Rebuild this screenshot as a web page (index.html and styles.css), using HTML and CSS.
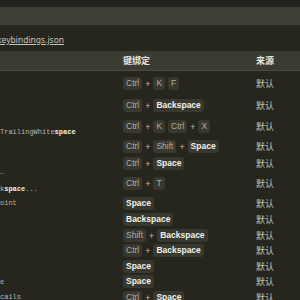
FILE: index.html
```html
<!DOCTYPE html>
<html lang="zh-CN">
<head>
    <meta charset="UTF-8">
    <title>键盘快捷方式</title>
    <link rel="stylesheet" href="styles.css">
</head>
<body>
    <div class="top-strip"></div>
    <div class="search-bar"></div>
    <div class="link-row"><a href="#">keybindings.json</a></div>

    <div class="table">
        <div class="head">
            <div></div>
            <div>键绑定</div>
            <div>来源</div>
        </div>

        <div class="row r1">
            <div class="cmd"></div>
            <div class="keys"><kbd>Ctrl</kbd><i>+</i><kbd>K</kbd><kbd>F</kbd></div>
            <div class="src">默认</div>
        </div>
        <div class="row r2">
            <div class="cmd"></div>
            <div class="keys"><kbd>Ctrl</kbd><i>+</i><kbd class="hit">Backspace</kbd></div>
            <div class="src">默认</div>
        </div>
        <div class="row r3">
            <div class="cmd low">TrailingWhite<b>space</b></div>
            <div class="keys"><kbd>Ctrl</kbd><i>+</i><kbd>K</kbd><kbd>Ctrl</kbd><i>+</i><kbd>X</kbd></div>
            <div class="src">默认</div>
        </div>
        <div class="row r4">
            <div class="cmd"></div>
            <div class="keys"><kbd>Ctrl</kbd><i>+</i><kbd>Shift</kbd><i>+</i><kbd class="hit">Space</kbd></div>
            <div class="src">默认</div>
        </div>
        <div class="row r5">
            <div class="cmd"></div>
            <div class="keys"><kbd>Ctrl</kbd><i>+</i><kbd class="hit">Space</kbd></div>
            <div class="src">默认</div>
        </div>
        <div class="row r6">
            <div class="cmd two"><span>—</span><span>k<b>space</b>...</span></div>
            <div class="keys"><kbd>Ctrl</kbd><i>+</i><kbd>T</kbd></div>
            <div class="src">默认</div>
        </div>
        <div class="row r7">
            <div class="cmd">oint</div>
            <div class="keys"><kbd class="hit">Space</kbd></div>
            <div class="src">默认</div>
        </div>
        <div class="row r8">
            <div class="cmd"></div>
            <div class="keys"><kbd class="hit">Backspace</kbd></div>
            <div class="src">默认</div>
        </div>
        <div class="row r9">
            <div class="cmd"></div>
            <div class="keys"><kbd>Shift</kbd><i>+</i><kbd class="hit">Backspace</kbd></div>
            <div class="src">默认</div>
        </div>
        <div class="row r10">
            <div class="cmd"></div>
            <div class="keys"><kbd>Ctrl</kbd><i>+</i><kbd class="hit">Backspace</kbd></div>
            <div class="src">默认</div>
        </div>
        <div class="row r11">
            <div class="cmd"></div>
            <div class="keys"><kbd class="hit">Space</kbd></div>
            <div class="src">默认</div>
        </div>
        <div class="row r12">
            <div class="cmd">e</div>
            <div class="keys"><kbd class="hit">Space</kbd></div>
            <div class="src">默认</div>
        </div>
        <div class="row r13">
            <div class="cmd">cails</div>
            <div class="keys"><kbd>Ctrl</kbd><i>+</i><kbd class="hit">Space</kbd></div>
            <div class="src">默认</div>
        </div>
    </div>
</body>
</html>
```

FILE: styles.css
```css
* {
    margin: 0;
    padding: 0;
    box-sizing: border-box;
}

body {
    width: 300px;
    height: 300px;
    overflow: hidden;
    background: #26261f;
    color: #c8c8c0;
    font-family: "Noto Sans", "Noto Sans CJK SC", sans-serif;
    font-size: 9px;
}

/* Top area */
.top-strip {
    height: 7px;
    background: #23231d;
}

.search-bar {
    height: 18px;
    background: #3e3f36;
}

.link-row {
    height: 26px;
    padding-top: 9px;
    line-height: 12px;
}

.link-row a {
    color: #c4c4bc;
    font-size: 8.5px;
    text-decoration: underline;
    text-underline-offset: 1px;
    margin-left: -3px;
}

/* Table */
.head,
.row {
    display: grid;
    grid-template-columns: 123px 133px 1fr;
}

.head {
    height: 20px;
    align-items: center;
    background: #3c3b31;
    border-bottom: 1px solid #4a4a40;
    color: #e6e6e0;
    font-size: 9px;
    font-weight: bold;
    font-family: "Noto Sans CJK SC", sans-serif;
    margin-bottom: 1px;
}

.row {
    align-items: center;
}

.r1 { height: 23px; }
.r2 { height: 21px; }
.r3 { height: 21px; }
.r4 { height: 18px; }
.r5 { height: 16px; }
.r6 { height: 24px; }
.r7 { height: 16px; }
.r8 { height: 16px; }
.r9 { height: 16px; }
.r10 { height: 15px; }
.r11 { height: 16px; }
.r12 { height: 15px; }
.r13 { height: 16px; }

.cmd {
    font-family: "Liberation Mono", monospace;
    font-size: 7px;
    color: #b8b8b0;
    white-space: nowrap;
    overflow: hidden;
}

.cmd b {
    color: #f0f0ea;
}

.cmd.low {
    align-self: end;
    padding-bottom: 1px;
}

.cmd.two {
    display: flex;
    flex-direction: column;
    justify-content: space-between;
    align-self: stretch;
    line-height: 9px;
    padding-bottom: 1px;
}

.cmd.two span:first-child {
    font-size: 6px;
    line-height: 6px;
}

/* Key chips */
.keys {
    display: flex;
    align-items: center;
    gap: 3px;
}

kbd {
    display: inline-block;
    height: 13px;
    line-height: 13px;
    padding: 0 3px;
    background: #38382f;
    border-radius: 3px;
    font-family: "Liberation Sans", sans-serif;
    font-size: 8.5px;
    color: #b0b0a8;
}

kbd.hit {
    color: #f2f2ec;
    font-weight: bold;
}

.keys i {
    font-style: normal;
    color: #c0c0b8;
    font-size: 9px;
}

.src {
    font-family: "Noto Sans CJK SC", sans-serif;
    font-size: 9px;
    color: #c4c4bc;
}
```
